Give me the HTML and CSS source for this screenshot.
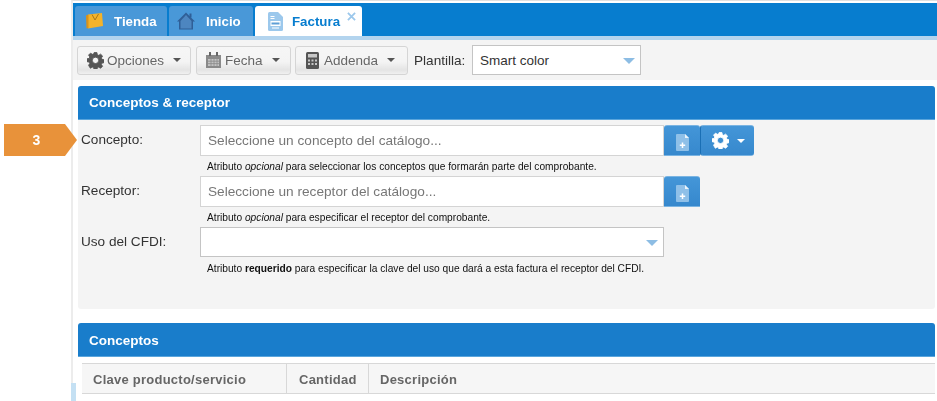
FILE: index.html
```html
<!DOCTYPE html>
<html lang="es">
<head>
<meta charset="utf-8">
<title>Factura</title>
<link rel="stylesheet" href="styles.css">
</head>
<body>
<div class="step"><span>3</span></div>
<div class="accent"></div>
<main class="main">
  <nav class="tabs">
    <a class="tab tab-tienda">
      <svg class="tab-icon" width="20" height="18" viewBox="0 0 20 18"><path d="M4 2.500 18 1l1 13-15 2.500z" fill="#f4b32a"/><path d="M2 3.500 4.500 2.500 4.500 16 2.500 16.500z" fill="#d8921b"/><path d="M8 2.500 11 8l3.500-6" fill="none" stroke="#a8781c" stroke-width="1"/></svg>
      Tienda
    </a>
    <a class="tab tab-inicio">
      <svg class="tab-icon" width="20" height="20" viewBox="0 0 20 20"><path d="M10 1.500 19 10.500H17V18.500H3V10.500H1z" fill="#2f5f97"/><path d="M10 4 15.500 10V17.500H4.500V10z" fill="#4d86c0"/><rect x="13.500" y="2.500" width="2" height="4" fill="#2f5f97"/></svg>
      Inicio
    </a>
    <a class="tab tab-active">
      <svg class="tab-icon" width="15" height="19" viewBox="0 0 15 19"><path d="M1.500 0H10L15 5V17.500Q15 19 13.500 19H1.500Q0 19 0 17.500V1.500Q0 0 1.500 0z" fill="#9cc8ec"/><rect x="2.500" y="9" width="10" height="5" fill="#fff"/><rect x="3.500" y="10.500" width="8" height="2" fill="#5f9fd6"/><rect x="2.500" y="4" width="4" height="1" fill="#fff"/><rect x="2.500" y="6" width="4" height="1" fill="#fff"/><rect x="4" y="15.500" width="7" height="1" fill="#fff"/></svg>
      Factura
      <svg class="tab-close" width="9" height="9" viewBox="0 0 10 10"><path d="M1 1 9 9M9 1 1 9" stroke="#9cc8ec" stroke-width="2"/></svg>
    </a>
  </nav>
  <div class="strip"></div>
  <div class="toolbar">
    <button class="tool tool-opciones">
      <svg width="17" height="17" viewBox="0 0 24 24"><use href="#gear" fill="#555" stroke="#555" stroke-width="1.200"/></svg>
      Opciones<i class="caret"></i>
    </button>
    <button class="tool tool-fecha">
      <svg width="15" height="16" viewBox="0 0 15 16"><path d="M0 3H15V16H0z" fill="#8a8a8a"/><rect x="3" y="0" width="2" height="4" fill="#666"/><rect x="10" y="0" width="2" height="4" fill="#666"/><path d="M2 7H13V14H2z" fill="#c2c2c2"/><path d="M2 9.200H13M2 11.600H13M5 7V14M8 7V14M11 7V14" stroke="#8a8a8a" stroke-width=".8"/></svg>
      Fecha<i class="caret"></i>
    </button>
    <button class="tool tool-addenda">
      <svg width="13" height="17" viewBox="0 0 13 17"><rect width="13" height="17" rx="1.500" fill="#555"/><rect x="2" y="2" width="9" height="3.500" fill="#c8c8c8"/><path d="M2 7.500h2v2H2zM5.500 7.500h2v2h-2zM9 7.500h2v2H9zM2 11h2v2H2zM5.500 11h2v2h-2zM9 11h2v2H9z" fill="#c8c8c8"/></svg>
      Addenda<i class="caret"></i>
    </button>
    <label class="tool-label">Plantilla:</label>
    <div class="select select-plantilla">Smart color<i class="select-caret"></i></div>
  </div>

  <section class="panel panel-form">
    <h2 class="panel-head">Conceptos &amp; receptor</h2>
    <div class="form">
      <div class="row">
        <label class="row-label">Concepto:</label>
        <div class="row-body">
          <div class="control">
            <div class="input">Seleccione un concepto del catálogo...</div>
            <button class="add"><svg width="13" height="17" viewBox="0 0 13 17"><use href="#doc"/></svg></button>
            <button class="add add-gear"><svg width="17" height="17" viewBox="0 0 24 24"><use href="#gear" fill="#fff" stroke="#fff" stroke-width="1.200"/></svg><i class="caret caret-white"></i></button>
          </div>
          <p class="hint">Atributo <em>opcional</em> para seleccionar los conceptos que formarán parte del comprobante.</p>
        </div>
      </div>
      <div class="row">
        <label class="row-label">Receptor:</label>
        <div class="row-body">
          <div class="control">
            <div class="input">Seleccione un receptor del catálogo...</div>
            <button class="add"><svg width="13" height="17" viewBox="0 0 13 17"><use href="#doc"/></svg></button>
          </div>
          <p class="hint">Atributo <em>opcional</em> para especificar el receptor del comprobante.</p>
        </div>
      </div>
      <div class="row">
        <label class="row-label">Uso del CFDI:</label>
        <div class="row-body">
          <div class="control">
            <div class="select select-uso"><i class="select-caret"></i></div>
          </div>
          <p class="hint">Atributo <strong>requerido</strong> para especificar la clave del uso que dará a esta factura el receptor del CFDI.</p>
        </div>
      </div>
    </div>
  </section>

  <section class="panel panel-table">
    <h2 class="panel-head">Conceptos</h2>
    <div class="thead">
      <div class="th th-clave">Clave producto/servicio</div>
      <div class="th th-cant">Cantidad</div>
      <div class="th th-desc">Descripción</div>
    </div>
  </section>
</main>
<svg class="defs" width="0" height="0">
  <defs>
    <path id="gear" fill-rule="evenodd" d="M10 1h4l.6 3 2 .9 2.600-1.700 2.800 2.800-1.700 2.600.9 2 3 .6v4l-3 .6-.9 2 1.700 2.600-2.800 2.800-2.600-1.700-2 .9-.6 3h-4l-.6-3-2-.9-2.600 1.700L2.200 19l1.700-2.600-.9-2-3-.6v-4l3-.6.9-2L2.200 4.600 5 1.800l2.600 1.700 2-.9zM12 7.500a4.500 4.500 0 1 0 0 9 4.500 4.500 0 0 0 0-9z" transform="translate(0 -.2)"/>
    <g id="doc"><path d="M1 0H9L13 4V16Q13 17 12 17H1Q0 17 0 16V1Q0 0 1 0z" fill="#8fc0e8"/><path d="M9 0 13 4H9z" fill="#eaf4fb"/><path d="M6.500 8.500V14M3.800 11.300H9.200" stroke="#fff" stroke-width="1.500"/></g>
  </defs>
</svg>
</body>
</html>
```
FILE: styles.css
```css
* { box-sizing: border-box; }
html, body { margin: 0; height: 401px; overflow: hidden; background: #fff; }
body { font-family: "Liberation Sans", Arial, sans-serif; color: #333; position: relative; }
.defs { position: absolute; }

.step {
  position: absolute; z-index: 2; left: 4px; top: 124px; width: 73px; height: 32px;
  background: #e8923a;
  clip-path: polygon(0 0, 61px 0, 73px 16px, 61px 32px, 0 32px);
  color: #fff; font-weight: bold; font-size: 14px;
  display: flex; align-items: center; justify-content: center; padding-right: 8px;
  filter: blur(.3px);
}
.accent { position: absolute; z-index: 2; left: 71px; top: 383px; width: 5px; height: 18px; background: #c4e0f3; }

.main {
  margin-left: 71px; height: 401px; padding-top: 2px;
  border-left: 2px solid #ececec;
  border-top: 1px solid #e0e0e0;
  filter: blur(.3px);
}

.tabs { display: flex; gap: 2px; height: 33px; background: #077dcf; padding: 3px 0 0 2px; }
.tab {
  display: flex; align-items: center; height: 30px;
  font-size: 13.300px; font-weight: bold; color: #fff;
  background: #4998d8; border-radius: 3px 3px 0 0;
  position: relative;
}
.tab-tienda { width: 92px; padding-left: 9px; gap: 10px; }
.tab-inicio { width: 84px; padding-left: 7px; gap: 10px; }
.tab-active { width: 107px; padding-left: 13px; gap: 9px; background: #fff; color: #077dcf; }
.tab-close { position: absolute; right: 6px; top: 6px; }
.strip { height: 4px; background: #b3d4ee; }

.toolbar { display: flex; align-items: center; height: 40px; padding: 0 0 0 4px; background: #f4f4f4; }
.tool {
  display: flex; align-items: center; height: 29px; padding: 0 0 0 9px;
  font: 13.500px "Liberation Sans", Arial, sans-serif; color: #666;
  border: 1px solid #d5d5d5; border-radius: 3px;
  background: linear-gradient(#f6f6f6 0%, #f4f4f4 55%, #e4e4e4 85%, #f0f0f0 100%);
  margin-right: 5px; gap: 3px;
}
.tool-opciones { width: 114px; }
.tool-fecha { width: 95px; margin-right: 4px; gap: 4px; }
.tool-addenda { width: 113px; margin-right: 6px; gap: 5px; padding-left: 10px; }
.caret {
  display: inline-block; width: 0; height: 0; margin-left: 6px;
  border-left: 4px solid transparent; border-right: 4px solid transparent; border-top: 4px solid #555;
}
.tool-fecha .caret { margin-left: 5px; }
.tool-addenda .caret { margin-left: 4px; }
.caret-white { border-top-color: #fff; margin-left: 8px; }
.tool-label { font-size: 13.600px; color: #333; width: 58px; }

.select {
  position: relative; background: #fff; border: 1px solid #c4c4c4;
  font-size: 13.500px; color: #333; display: flex; align-items: center; padding-left: 7px;
}
.select-plantilla { width: 169px; height: 30px; }
.select-uso { width: 464px; height: 30px; }
.select-caret {
  position: absolute; right: 5px; top: 12px; width: 0; height: 0;
  border-left: 6px solid transparent; border-right: 6px solid transparent; border-top: 6px solid #8dbde4;
}

.panel { margin: 6px 2px 0 5px; }
.panel-head {
  margin: 0; height: 34px; padding: 0 0 1px 11px;
  display: flex; align-items: center;
  background: #197dcb; color: #fff; font-size: 13.500px; font-weight: bold;
  border-radius: 3px 3px 0 0;
  border-bottom: 1px solid #5aa5dc;
}
.panel-form { background: #f4f4f4; height: 223px; border-radius: 3px; }
.form { padding: 5px 0 0 3px; }
.row { display: flex; height: 51px; }
.row-label { width: 119px; font-size: 13.600px; padding-top: 6.500px; color: #333; }
.row-body { display: flex; flex-direction: column; }
.control { display: flex; height: 31px; }
.input {
  width: 464px; height: 31px; background: #fff; border: 1px solid #d4d4d4;
  font-size: 13.650px; color: #777; display: flex; align-items: center; padding-left: 7px;
}
.add {
  width: 36px; height: 31px; padding: 3px 0 0; border: 0; border-radius: 3px 3px 0 0;
  background: linear-gradient(#4496d8, #3688cd);
  border-top: 1px solid #7ab4e2; border-bottom: 1px solid #7ab4e2;
  display: flex; align-items: center; justify-content: center;
}
.add-gear { width: 54px; padding: 0 0 0 2px; border-left: 1px solid #1a6fb5; border-radius: 3px; }
.hint { margin: 0; padding: 5px 0 0 7px; font-size: 10.200px; line-height: 12px; color: #111; }

.panel-table { margin-top: 14px; }
.panel-table .panel-head { padding: 1px 0 0 11px; }
.thead {
  display: flex; height: 31px; margin: 6px 0 0 4px;
  border-top: 1px solid #d8d8d8; border-bottom: 1px solid #d8d8d8;
  background: #f6f6f6;
}
.th { font-size: 13px; font-weight: bold; color: #666; display: flex; align-items: center; padding-top: 1px; border-right: 1px solid #d8d8d8; letter-spacing: .25px; }
.th-clave { width: 205px; padding-left: 11px; }
.th-cant { width: 82px; padding-left: 12px; }
.th-desc { flex: 1; padding-left: 11px; border-right: 0; }
```
